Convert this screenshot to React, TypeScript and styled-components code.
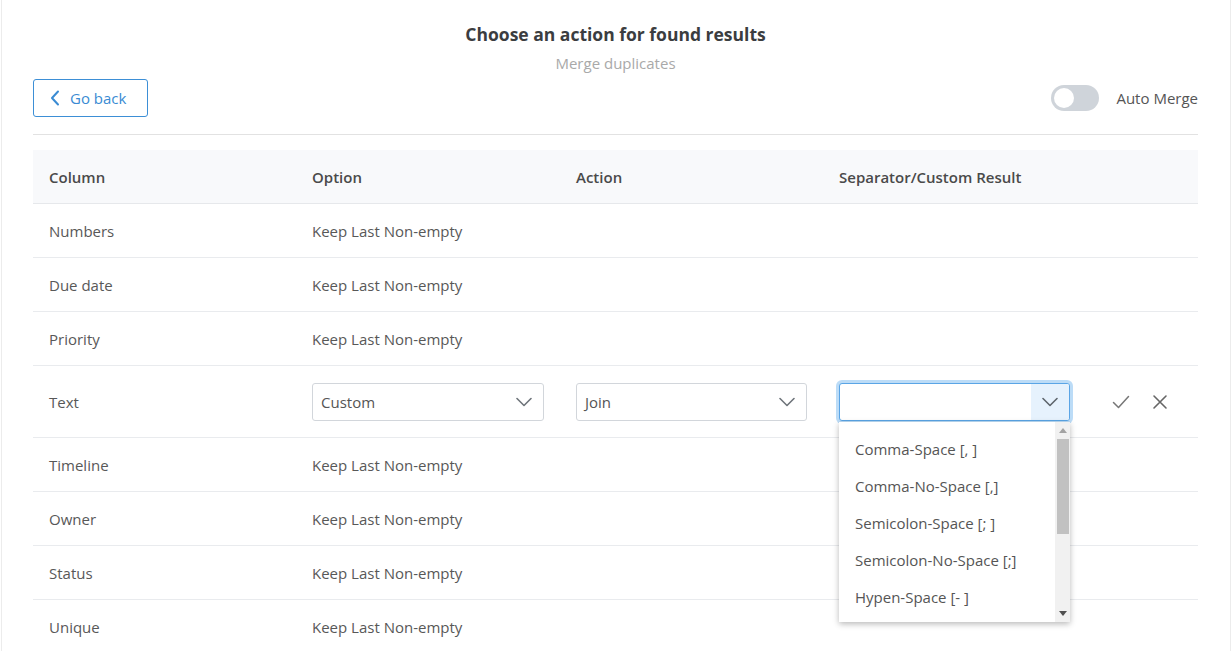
import * as React from 'react';
import styled, { createGlobalStyle } from 'styled-components';

const GlobalStyle = createGlobalStyle`
  html, body {
    margin: 0;
    padding: 0;
    background: #ffffff;
    font-family: "Open Sans", "Noto Sans", sans-serif;
  }
`;

const Page = styled.div`
  height: 651px;
  overflow: hidden;
  box-sizing: border-box;
  margin: 0 1px;
  border-left: 1px solid #ececec;
  border-right: 1px solid #ececec;
  padding: 22px 32px 0 31px;
`;

const Title = styled.h1`
  margin: 0;
  font-size: 17.5px;
  line-height: 24px;
  font-weight: 700;
  color: #3b3d40;
  text-align: center;
`;

const Subtitle = styled.div`
  margin-top: 7px;
  font-size: 15px;
  line-height: 20px;
  color: #a9a9a9;
  text-align: center;
`;

const Toolbar = styled.div`
  margin-top: 6px;
  display: flex;
  align-items: center;
  justify-content: space-between;
  padding-bottom: 17px;
  border-bottom: 1px solid #e2e2e2;
`;

const BackButton = styled.button`
  display: flex;
  align-items: center;
  gap: 10px;
  height: 38px;
  width: 115px;
  box-sizing: border-box;
  padding: 0 0 0 16px;
  border: 1px solid #3d8fd6;
  border-radius: 3px;
  background: #fff;
  color: #3a8bd3;
  font-family: inherit;
  font-size: 15px;
`;

const ToggleWrap = styled.label`
  display: flex;
  align-items: center;
  gap: 17px;
  font-size: 15px;
  color: #555;
`;

const Track = styled.span<{ on?: boolean }>`
  width: 48px;
  height: 26px;
  border-radius: 13px;
  background: ${(p) => (p.on ? '#3d8fd6' : '#cfd4da')};
  display: flex;
  align-items: center;
  padding: 0 3px;
  box-sizing: border-box;
  justify-content: ${(p) => (p.on ? 'flex-end' : 'flex-start')};
`;

const Knob = styled.span`
  width: 20px;
  height: 20px;
  border-radius: 50%;
  background: #fff;
`;

const Table = styled.div`
  margin-top: 15px;
  display: grid;
  grid-template-columns: 263px 264px 263px 263px 1fr;
`;

const HeadCell = styled.div`
  background: #f8f9fb;
  height: 53px;
  border-bottom: 1px solid #e6e8eb;
  display: flex;
  align-items: center;
  padding: 0 16px;
  font-size: 15px;
  font-weight: 600;
  color: #4a4a4a;
`;

const Cell = styled.div<{ tall?: boolean }>`
  position: relative;
  height: ${(p) => (p.tall ? '71px' : '53px')};
  border-bottom: 1px solid #e9ebee;
  display: flex;
  align-items: center;
  padding: 0 16px;
  font-size: 15px;
  color: #585858;
`;

const IconCell = styled(Cell)`
  padding-left: 26px;
  gap: 22px;
`;

const SelectBox = styled.div<{ focused?: boolean }>`
  width: 100%;
  height: 38px;
  box-sizing: border-box;
  display: flex;
  align-items: stretch;
  border: 1px solid ${(p) => (p.focused ? '#5aa5e6' : '#d2d6db')};
  border-radius: 3px;
  background: #fff;
  box-shadow: ${(p) => (p.focused ? '0 0 0 3px #bcdcf7' : 'none')};
  overflow: hidden;
`;

const SelectValue = styled.span`
  flex: 1;
  display: flex;
  align-items: center;
  padding-left: 8px;
  font-size: 15px;
  color: #555;
`;

const ArrowArea = styled.span<{ focused?: boolean }>`
  width: 38px;
  display: flex;
  align-items: center;
  justify-content: center;
  background: ${(p) => (p.focused ? '#e6f2fd' : 'transparent')};
`;

const Menu = styled.div`
  position: absolute;
  top: 56px;
  left: 16px;
  width: 231px;
  height: 200px;
  background: #fff;
  box-shadow: 0 2px 6px rgba(0, 0, 0, 0.28);
  display: flex;
  z-index: 5;
`;

const MenuList = styled.div`
  flex: 1;
  padding-top: 8px;
`;

const MenuItem = styled.div`
  height: 37px;
  display: flex;
  align-items: center;
  padding-left: 16px;
  font-size: 15px;
  color: #555;
  white-space: nowrap;
`;

const Scrollbar = styled.div`
  width: 15px;
  background: #f1f1f1;
  display: flex;
  flex-direction: column;
  align-items: center;
`;

const ScrollArrow = styled.div`
  height: 17px;
  display: flex;
  align-items: center;
  justify-content: center;
`;

const Thumb = styled.div`
  width: 12px;
  height: 95px;
  background: #c1c1c1;
`;

const Spacer = styled.div`
  flex: 1;
`;

const Chevron = ({ color = '#6f757b' }: { color?: string }) => (
  <svg width="16" height="10" viewBox="0 0 16 10" fill="none">
    <path d="M1 1.5l7 7 7-7" stroke={color} strokeWidth="1.6" strokeLinecap="round" strokeLinejoin="round" />
  </svg>
);

const rows: { name: string; option: string }[] = [
  { name: 'Numbers', option: 'Keep Last Non-empty' },
  { name: 'Due date', option: 'Keep Last Non-empty' },
  { name: 'Priority', option: 'Keep Last Non-empty' },
  { name: 'Text', option: '' },
  { name: 'Timeline', option: 'Keep Last Non-empty' },
  { name: 'Owner', option: 'Keep Last Non-empty' },
  { name: 'Status', option: 'Keep Last Non-empty' },
  { name: 'Unique', option: 'Keep Last Non-empty' },
];

const separators = [
  'Comma-Space [, ]',
  'Comma-No-Space [,]',
  'Semicolon-Space [; ]',
  'Semicolon-No-Space [;]',
  'Hypen-Space [- ]',
];

export default function App() {
  return (
    <>
      <GlobalStyle />
      <Page>
        <Title>Choose an action for found results</Title>
        <Subtitle>Merge duplicates</Subtitle>
        <Toolbar>
          <BackButton>
            <svg width="10" height="16" viewBox="0 0 10 16" fill="none">
              <path d="M8 1.5L2 8l6 6.5" stroke="#3a8bd3" strokeWidth="2" strokeLinecap="round" strokeLinejoin="round" />
            </svg>
            Go back
          </BackButton>
          <ToggleWrap>
            <Track>
              <Knob />
            </Track>
            Auto Merge
          </ToggleWrap>
        </Toolbar>

        <Table>
          <HeadCell>Column</HeadCell>
          <HeadCell>Option</HeadCell>
          <HeadCell>Action</HeadCell>
          <HeadCell>Separator/Custom Result</HeadCell>
          <HeadCell />
          {rows.map((r) =>
            r.option ? (
              <React.Fragment key={r.name}>
                <Cell>{r.name}</Cell>
                <Cell>{r.option}</Cell>
                <Cell />
                <Cell />
                <Cell />
              </React.Fragment>
            ) : (
              <React.Fragment key={r.name}>
                <Cell tall>{r.name}</Cell>
                <Cell tall>
                  <SelectBox>
                    <SelectValue>Custom</SelectValue>
                    <ArrowArea>
                      <Chevron />
                    </ArrowArea>
                  </SelectBox>
                </Cell>
                <Cell tall>
                  <SelectBox>
                    <SelectValue>Join</SelectValue>
                    <ArrowArea>
                      <Chevron />
                    </ArrowArea>
                  </SelectBox>
                </Cell>
                <Cell tall>
                  <SelectBox focused>
                    <SelectValue />
                    <ArrowArea focused>
                      <Chevron color="#5f666d" />
                    </ArrowArea>
                  </SelectBox>
                  <Menu>
                    <MenuList>
                      {separators.map((s) => (
                        <MenuItem key={s}>{s}</MenuItem>
                      ))}
                    </MenuList>
                    <Scrollbar>
                      <ScrollArrow>
                        <svg width="8" height="5" viewBox="0 0 8 5">
                          <path d="M0 5L4 0l4 5z" fill="#a3a3a3" />
                        </svg>
                      </ScrollArrow>
                      <Thumb />
                      <Spacer />
                      <ScrollArrow>
                        <svg width="8" height="5" viewBox="0 0 8 5">
                          <path d="M0 0h8L4 5z" fill="#505050" />
                        </svg>
                      </ScrollArrow>
                    </Scrollbar>
                  </Menu>
                </Cell>
                <IconCell tall>
                  <svg width="18" height="14" viewBox="0 0 18 14" fill="none">
                    <path d="M1.5 7.5l5 5L16.5 1.5" stroke="#777" strokeWidth="1.5" strokeLinecap="round" strokeLinejoin="round" />
                  </svg>
                  <svg width="16" height="16" viewBox="0 0 16 16" fill="none">
                    <path d="M2 2l12 12M14 2L2 14" stroke="#666" strokeWidth="1.6" strokeLinecap="round" />
                  </svg>
                </IconCell>
              </React.Fragment>
            )
          )}
        </Table>
      </Page>
    </>
  );
}
